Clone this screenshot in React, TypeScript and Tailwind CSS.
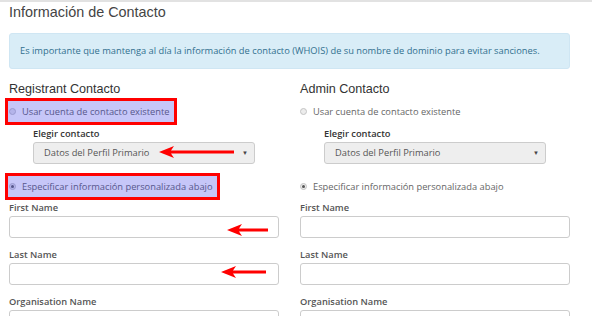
import React from "react";

const body = "font-['Open_Sans',_'Liberation_Sans',_sans-serif]";
const head = "font-['Liberation_Sans',_Arial,_sans-serif]";

function Radio({ checked, hl }: { checked?: boolean; hl?: boolean }) {
  return (
    <span
      className={`flex h-[7px] w-[7px] shrink-0 items-center justify-center rounded-full border ${
        hl ? "border-[#9a9ad0] bg-[#b4b4ea]" : "border-[#c4c4c4] bg-[#ececec]"
      }`}
    >
      {checked && <span className={`h-[3px] w-[3px] rounded-full ${hl ? "bg-[#55558a]" : "bg-[#555]"}`} />}
    </span>
  );
}

function RadioRow({ label, checked, hl }: { label: string; checked?: boolean; hl?: boolean }) {
  if (hl) {
    return (
      <div className="-ml-[4px] flex h-[27px] w-fit items-center gap-[6px] border-[3px] border-[#f00] bg-[#c6c6f8] pl-[1px] pr-[4px] text-[9.3px] text-[#57578c]">
        <Radio checked={checked} hl />
        <span>{label}</span>
      </div>
    );
  }
  return (
    <div className="flex h-[27px] items-center gap-[6px] text-[9.3px] text-[#666]">
      <Radio checked={checked} />
      <span>{label}</span>
    </div>
  );
}

function Field({ label, first }: { label: string; first?: boolean }) {
  return (
    <div className={first ? "mt-[1px]" : "mt-[10px]"}>
      <div className="text-[9.3px] font-semibold leading-[14px] text-[#555]">{label}</div>
      <div className="mt-[1px] h-[22px] w-[270px] rounded-[3px] border border-[#ccc] bg-white" />
    </div>
  );
}

function ContactColumn({ title, marked }: { title: string; marked?: boolean }) {
  return (
    <div className="flex w-[270px] flex-col">
      <h3 className={`${head} h-[17px] text-[12.6px] leading-[17px] text-[#333]`}>{title}</h3>
      <RadioRow label="Usar cuenta de contacto existente" hl={marked} />
      <div className="ml-[24px] mt-[2px]">
        <div className="text-[9.3px] font-semibold leading-[14px] text-[#333]">Elegir contacto</div>
        <div className="mt-[1px] flex h-[22px] w-[222px] items-center justify-between rounded-[3px] border border-[#ccc] bg-[#eee] pl-[10px] pr-[6px] text-[9.3px] text-[#555]">
          <span>Datos del Perfil Primario</span>
          <span className="text-[6px] text-[#444]">▼</span>
        </div>
      </div>
      <div className="mt-[9px]">
        <RadioRow label="Especificar información personalizada abajo" checked hl={marked} />
      </div>
      <Field label="First Name" first />
      <Field label="Last Name" />
      <Field label="Organisation Name" />
    </div>
  );
}

function Arrow({ x, y, len }: { x: number; y: number; len: number }) {
  return (
    <svg
      className="absolute"
      style={{ left: x, top: y - 7 }}
      width={len}
      height={14}
      viewBox={`0 0 ${len} 14`}
    >
      <path d={`M0 7 L15 1 L12 5.6 L${len} 5.6 L${len} 8.4 L12 8.4 L15 13 Z`} fill="#f00" />
    </svg>
  );
}

export default function App() {
  return (
    <div className={`${body} relative h-[316px] w-[592px] overflow-hidden border-t-2 border-[#e2e2e2] bg-white px-[9px]`}>
      <h2 className={`${head} mt-[1px] text-[14.4px] leading-[18px] text-[#444]`}>Información de Contacto</h2>

      <div className="mt-[12px] flex h-[36px] w-[561px] items-center rounded-[3px] border border-[#cfe6f3] bg-[#d9edf7] pl-[10px] text-[9.3px] text-[#31708f]">
        Es importante que mantenga al día la información de contacto (WHOIS) de su nombre de dominio para evitar sanciones.
      </div>

      <div className="mt-[12px] flex gap-[21px]">
        <ContactColumn title="Registrant Contacto" marked />
        <ContactColumn title="Admin Contacto" />
      </div>

      <Arrow x={159} y={150} len={75} />
      <Arrow x={227} y={228} len={41} />
      <Arrow x={221} y={270} len={45} />
    </div>
  );
}
